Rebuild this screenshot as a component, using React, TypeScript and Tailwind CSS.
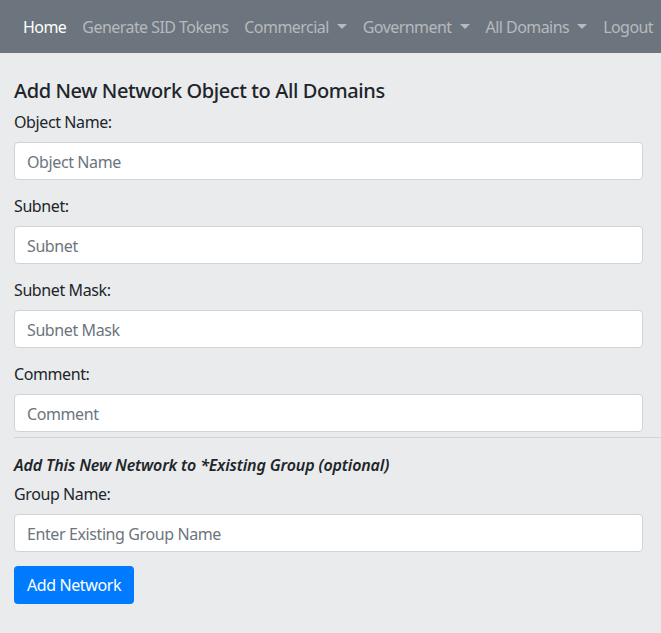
import React from "react";

const Caret = () => (
  <span className="ml-[8px] inline-block h-0 w-0 border-x-[5px] border-t-[5px] border-x-transparent border-t-current align-middle"></span>
);

const Field = ({ label, placeholder }: { label: string; placeholder: string }) => (
  <div className="mb-[14px]">
    <label className="mb-[8px] block h-[24px] leading-[24px]">{label}</label>
    <input
      className="block h-[38px] w-full rounded-[4px] border border-[#ced4da] bg-white px-[12px] pt-[1px] text-[16px] tracking-[-0.4px] text-[#495057] placeholder:text-[#6c757d] outline-none"
      placeholder={placeholder}
    />
  </div>
);

export default function App() {
  return (
    <div
      className="min-h-[633px] bg-[#e9ebed] text-[16px] tracking-[-0.4px] text-[#212529]"
      style={{ fontFamily: '"Noto Sans", "Open Sans", sans-serif' }}
    >
      <nav className="flex h-[53px] items-center whitespace-nowrap bg-[#6c757d] pl-[23px] text-[16px] tracking-[-0.55px] text-[#b6babe]">
        <div className="flex items-center gap-[16px]">
          <span className="text-white">Home</span>
          <span>Generate SID Tokens</span>
          <span className="flex items-center">Commercial<Caret /></span>
          <span className="flex items-center">Government<Caret /></span>
          <span className="flex items-center">All Domains<Caret /></span>
          <span>Logout</span>
        </div>
      </nav>
      <div className="pl-[14px]">
        <div className="pr-[18px]">
          <h5 className="mt-[26px] mb-[7px] h-[24px] text-[20px] font-medium leading-[24px]">
            Add New Network Object to All Domains
          </h5>
          <Field label="Object Name:" placeholder="Object Name" />
          <Field label="Subnet:" placeholder="Subnet" />
          <Field label="Subnet Mask:" placeholder="Subnet Mask" />
          <div className="mb-[5px]">
            <label className="mb-[8px] block h-[24px] leading-[24px]">Comment:</label>
            <input
              className="block h-[38px] w-full rounded-[4px] border border-[#ced4da] bg-white px-[12px] pt-[1px] text-[16px] tracking-[-0.4px] placeholder:text-[#6c757d] outline-none"
              placeholder="Comment"
            />
          </div>
        </div>
        <hr className="border-0 border-t border-[#d2d4d7]" />
        <div className="pr-[18px]">
          <h6 className="mt-[15px] mb-[5px] h-[24px] text-[16px] font-semibold italic leading-[24px] tracking-[-0.15px]">
            Add This New Network to *Existing Group (optional)
          </h6>
          <Field label="Group Name:" placeholder="Enter Existing Group Name" />
          <button className="h-[38px] rounded-[4px] bg-[#007bff] px-[13px] text-[16px] text-white">
            Add Network
          </button>
        </div>
      </div>
    </div>
  );
}
